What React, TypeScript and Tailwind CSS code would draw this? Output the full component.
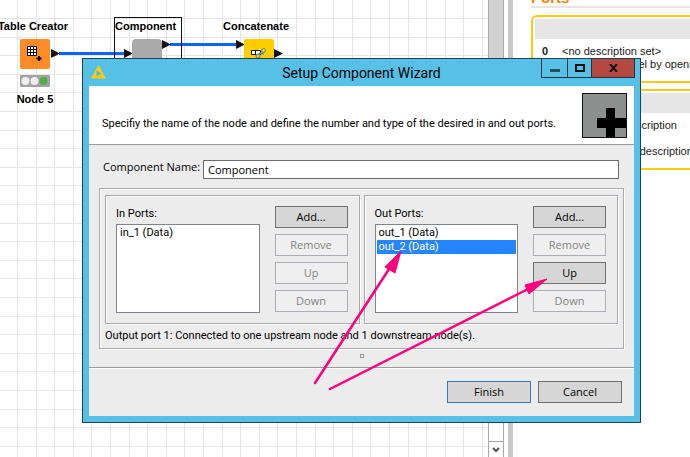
import React, { useState } from 'react';

interface PortGroupProps {
    title: string;
    id: string;
    ports: string[];
    initial?: string[];
    canMoveUp?: boolean;
}

interface PortCardProps {
    rows: { index?: string; lines: string[] }[];
}

const GRID_LINES = [0, 19, 37, 56, 74];

// --- WORKFLOW CANVAS ---
function WorkflowCanvas() {
    return (
        <main className="relative flex-1 overflow-hidden bg-white font-['Liberation_Sans',Arial,sans-serif] text-[11px] font-bold text-black">
            <svg className="absolute inset-0 h-full w-full" aria-hidden="true">
                <defs>
                    <pattern id="grid" x="17" y="18" width="93" height="93" patternUnits="userSpaceOnUse">
                        {GRID_LINES.map((n) => (
                            <path key={n} d={`M${n} 0h1v93h-1zM0 ${n}h93v1h-93z`} fill="#e6e6e6" />
                        ))}
                    </pattern>
                </defs>
                <rect width="100%" height="100%" fill="url(#grid)" />
                <path d="M59 53.5H125M170 44.5H237" stroke="#0a64ff" strokeWidth="3" />
                <path d="M51 49l9 4.500-9 4.500zM124 49l9 4.500-9 4.500zM162 40l9 4.500-9 4.500zM236 40l9 4.500-9 4.500zM274 49l9 4.500-9 4.500z" fill="#111" />
                <rect x="114.500" y="17.500" width="67" height="60" fill="none" stroke="#111" />
            </svg>

            <div className="absolute -left-2 top-5 flex w-[86px] flex-col items-center">
                <span className="-ml-1 whitespace-nowrap leading-3">Table Creator</span>
                <svg className="mt-[7px]" width="30" height="30" aria-hidden="true">
                    <rect width="30" height="30" rx="2" fill="#ff8a28" />
                    <path d="M7.500 7.500h9v9h-9zM10.500 7.500v9M13.500 7.500v9M7.500 10.500h9M7.500 13.500h9" fill="#fff" stroke="#000" />
                    <path d="M19 17v5M16.500 19.500h5" stroke="#000" strokeWidth="2" />
                </svg>
                <svg className="mt-1.5" width="30" height="12" aria-hidden="true">
                    <rect width="30" height="12" rx="1" fill="#a3a3a3" />
                    <circle cx="5.500" cy="6" r="4" fill="#eee" />
                    <circle cx="14.500" cy="6" r="4" fill="#eee" />
                    <circle cx="23.500" cy="6" r="4" fill="#4fae45" />
                </svg>
                <span className="mt-1.5 leading-3">Node 5</span>
            </div>

            <div className="absolute left-[115px] top-5 flex flex-col">
                <span className="leading-3">Component</span>
                <span className="ml-[17px] mt-[7px] size-[30px] rounded-sm bg-[#aaa]" />
            </div>

            <div className="absolute left-[223px] top-5 flex flex-col">
                <span className="leading-3">Concatenate</span>
                <svg className="ml-[21px] mt-[7px]" width="30" height="30" aria-hidden="true">
                    <rect width="30" height="30" rx="2" fill="#fc0" />
                    <path d="M7.500 11.500h9v4h-9zM11.500 11.500v4" fill="#fff" stroke="#111" />
                    <path d="M13 17l3-3 4 1M17 12l3-1" fill="none" stroke="#4a8fa0" strokeWidth="1.500" />
                    <circle cx="19.500" cy="11.500" r="2" fill="#fc0" stroke="#4a8fa0" />
                    <circle cx="14" cy="17" r="2" fill="#fc0" stroke="#4a8fa0" />
                </svg>
            </div>
        </main>
    );
}

function PortCard({ rows }: PortCardProps) {
    return (
        <div className="rounded-l-md border-2 border-r-0 border-[#fdcb10] bg-white pl-0.5 pt-0.5">
            <div className="h-5 bg-[#e6e6e6]" />
            <dl className="grid grid-cols-[20px_1fr] gap-y-[13px] pb-2.5 pl-[7px] pt-1.5 leading-[13px]">
                {rows.map((row, i) => (
                    <React.Fragment key={i}>
                        <dt className="font-bold">{row.index}</dt>
                        <dd>
                            {row.lines.map((line) => (
                                <p key={line} className="whitespace-nowrap">{line}</p>
                            ))}
                        </dd>
                    </React.Fragment>
                ))}
            </dl>
        </div>
    );
}

// --- NODE DESCRIPTION ---
function DescriptionPanel() {
    return (
        <aside className="w-[177px] shrink-0 overflow-hidden bg-white pl-[18px] font-['Liberation_Sans',Arial,sans-serif] text-[11px] text-[#222]">
            <h2 className="-mt-2.5 border-b-2 border-[#e6e6e6] text-[15px] font-bold leading-4 text-[#ff8000]">Ports</h2>
            <div className="mt-[7px] flex flex-col gap-1.5">
                <PortCard rows={[{ index: '0', lines: ['<no description set>', 'Change this label by opening'] }]} />
                <PortCard
                    rows={[
                        { index: '0', lines: ['Change this description'] },
                        { index: '1', lines: ['Change its port description'] },
                    ]}
                />
            </div>
        </aside>
    );
}

function DialogButton({ children, disabled, className = 'w-full border-[#707070]' }: { children: React.ReactNode; disabled?: boolean; className?: string }) {
    return (
        <button
            disabled={disabled}
            className={`h-[22px] border bg-[#d6d6d6] text-center font-['Open_Sans','Noto_Sans',sans-serif] leading-4 text-black disabled:border-[#adadb5] disabled:bg-[#efefef] disabled:text-[#838383] ${className}`}
        >
            {children}
        </button>
    );
}

function PortGroup({ title, id, ports, initial = [], canMoveUp }: PortGroupProps) {
    const [selected, setSelected] = useState(initial);

    return (
        <div className="flex flex-1 gap-[15px] border border-[#a9a9b0] py-2.5 pl-2.5 pr-[11px] shadow-[inset_1px_1px_#fff,1px_1px_#fff]">
            <div className="flex flex-1 flex-col">
                <label htmlFor={id} className="mb-0.5 leading-4">{title}</label>
                <select
                    id={id}
                    multiple
                    size={4}
                    value={selected}
                    onChange={(e) => setSelected(Array.from(e.target.selectedOptions, (o) => o.value))}
                    className="h-[89px] w-full appearance-none overflow-hidden border border-[#7f838c] bg-white px-px py-px outline-none"
                >
                    {ports.map((port) => (
                        <option
                            key={port}
                            value={port}
                            className="h-3.5 min-h-0 px-0.5 py-0 leading-[14px] text-black checked:bg-[linear-gradient(#2684ff,#2684ff)] checked:text-white"
                        >
                            {port}
                        </option>
                    ))}
                </select>
            </div>
            <div className="flex w-[73px] flex-col gap-1.5">
                <DialogButton>Add...</DialogButton>
                <DialogButton disabled>Remove</DialogButton>
                <DialogButton disabled={!canMoveUp}>Up</DialogButton>
                <DialogButton disabled>Down</DialogButton>
            </div>
        </div>
    );
}

// --- SETUP WIZARD ---
function SetupWizard() {
    const [name, setName] = useState('Component');

    return (
        <section
            role="dialog"
            aria-labelledby="wizard-title"
            className="absolute left-[82px] top-[58px] w-[559px] border border-[#25404d] bg-[#57c0e6] px-1.5 pb-1.5 font-[Roboto,'Open_Sans',sans-serif] text-[11px] text-black"
        >
            <header className="-mr-1.5 flex h-[27px] items-start pl-0.5">
                <svg className="mt-1.5" width="15" height="14" viewBox="0 0 15 14" aria-hidden="true">
                    <path d="M7.500 0L15 13.500H0z" fill="#fbcb14" />
                    <path d="M5.500 5.500l5 3-5 3z" fill="#57b5d6" />
                </svg>
                <h1 id="wizard-title" className="flex-1 pl-[76px] text-center text-sm leading-7">Setup Component Wizard</h1>
                <div className="mr-[5px] flex h-[19px] border-x border-b border-[#1d3440]">
                    <button aria-label="Minimize" className="flex w-[26px] items-center justify-center border-r border-[#1d3440]">
                        <svg width="10" height="10"><path d="M0 6h10v3H0z" fill="#24505f" /></svg>
                    </button>
                    <button aria-label="Maximize" className="flex w-6 items-center justify-center border-r border-[#1d3440]">
                        <svg width="10" height="8"><path d="M1 1h8v6H1z" fill="none" stroke="#111" strokeWidth="2" /></svg>
                    </button>
                    <button aria-label="Close" className="flex w-[42px] items-center justify-center bg-[#b64842]">
                        <svg width="9" height="8"><path d="M1 0l7 8M8 0L1 8" stroke="#111" strokeWidth="2" /></svg>
                    </button>
                </div>
            </header>

            <div className="bg-[#ececec]">
                <div className="flex h-[59px] items-end justify-between border-b border-[#9b9b9b] bg-white pb-1.5 pl-[13px] pr-[7px]">
                    <p className="mb-1.5 whitespace-nowrap leading-4">
                        Specifiy the name of the node and define the number and type of the desired in and out ports.
                    </p>
                    <svg width="45" height="45" aria-hidden="true">
                        <rect x="0.500" y="0.500" width="44" height="44" fill="#8d8f8f" stroke="#111" />
                        <path d="M24 15h9v10h11v10H33v9h-9v-9h-9V25h9z" fill="#000" />
                    </svg>
                </div>

                <form className="px-2.5 pb-[18px] pt-[15px]" onSubmit={(e) => e.preventDefault()}>
                    <div className="flex pl-1 pr-[5px] font-['Open_Sans','Noto_Sans',sans-serif]">
                        <label htmlFor="component-name" className="w-[100px] whitespace-nowrap leading-[14px]">Component Name:</label>
                        <input
                            id="component-name"
                            value={name}
                            onChange={(e) => setName(e.target.value)}
                            className="h-[19px] min-w-0 flex-1 border border-[#6c6c70] bg-white px-1 outline-none"
                        />
                    </div>

                    <div className="mt-[9px] border border-[#a9a9b0] px-[5px] pb-1 pt-1.5 shadow-[inset_1px_1px_#fff,1px_1px_#fff]">
                        <div className="flex gap-1">
                            <PortGroup title="In Ports:" id="in-ports" ports={['in_1 (Data)']} />
                            <PortGroup title="Out Ports:" id="out-ports" ports={['out_1 (Data)', 'out_2 (Data)']} initial={['out_2 (Data)']} canMoveUp />
                        </div>
                        <p className="mt-1 leading-4">Output port 1: Connected to one upstream node and 1 downstream node(s).</p>
                    </div>
                </form>

                <footer className="relative flex justify-end gap-[7px] border-t border-[#9b9b9b] px-3 py-[13px] shadow-[inset_0_1px_#fff]">
                    <span className="absolute -top-3.5 left-1/2 -ml-0.5 size-1 border border-[#999]" />
                    <DialogButton className="w-[84px] border-[#3c78bd]">Finish</DialogButton>
                    <DialogButton className="w-[84px] border-[#707070]">Cancel</DialogButton>
                </footer>
            </div>

            {/* pointers to the selected port and the Up button */}
            <svg className="pointer-events-none absolute left-[217px] top-[187px]" width="260" height="150" aria-hidden="true">
                <g fill="#ff007f" stroke="#ff007f">
                    <path d="M15 137L91 20M30 143L228 43" strokeWidth="2.500" strokeLinecap="round" />
                    <path d="M101 5L85 21L95 27zM247 33L225 39L229 48z" strokeWidth="1" />
                </g>
            </svg>
        </section>
    );
}

export default function App() {
    return (
        <div className="relative flex h-screen overflow-hidden bg-white">
            <WorkflowCanvas />
            <div className="flex w-4 shrink-0 flex-col border-x border-[#a9a9a9] bg-white">
                <div className="h-[120px] bg-[#d2d2d2]" />
                <button aria-label="Scroll down" className="mt-auto flex h-4 items-center justify-center border-t border-[#a9a9a9]">
                    <svg width="8" height="6"><path d="M1 1l3 3 3-3" fill="none" stroke="#555" strokeWidth="2" /></svg>
                </button>
            </div>
            <div className="ml-1 w-[5px] shrink-0 bg-[#c8c8c8]" />
            <DescriptionPanel />
            <SetupWizard />
        </div>
    );
}
